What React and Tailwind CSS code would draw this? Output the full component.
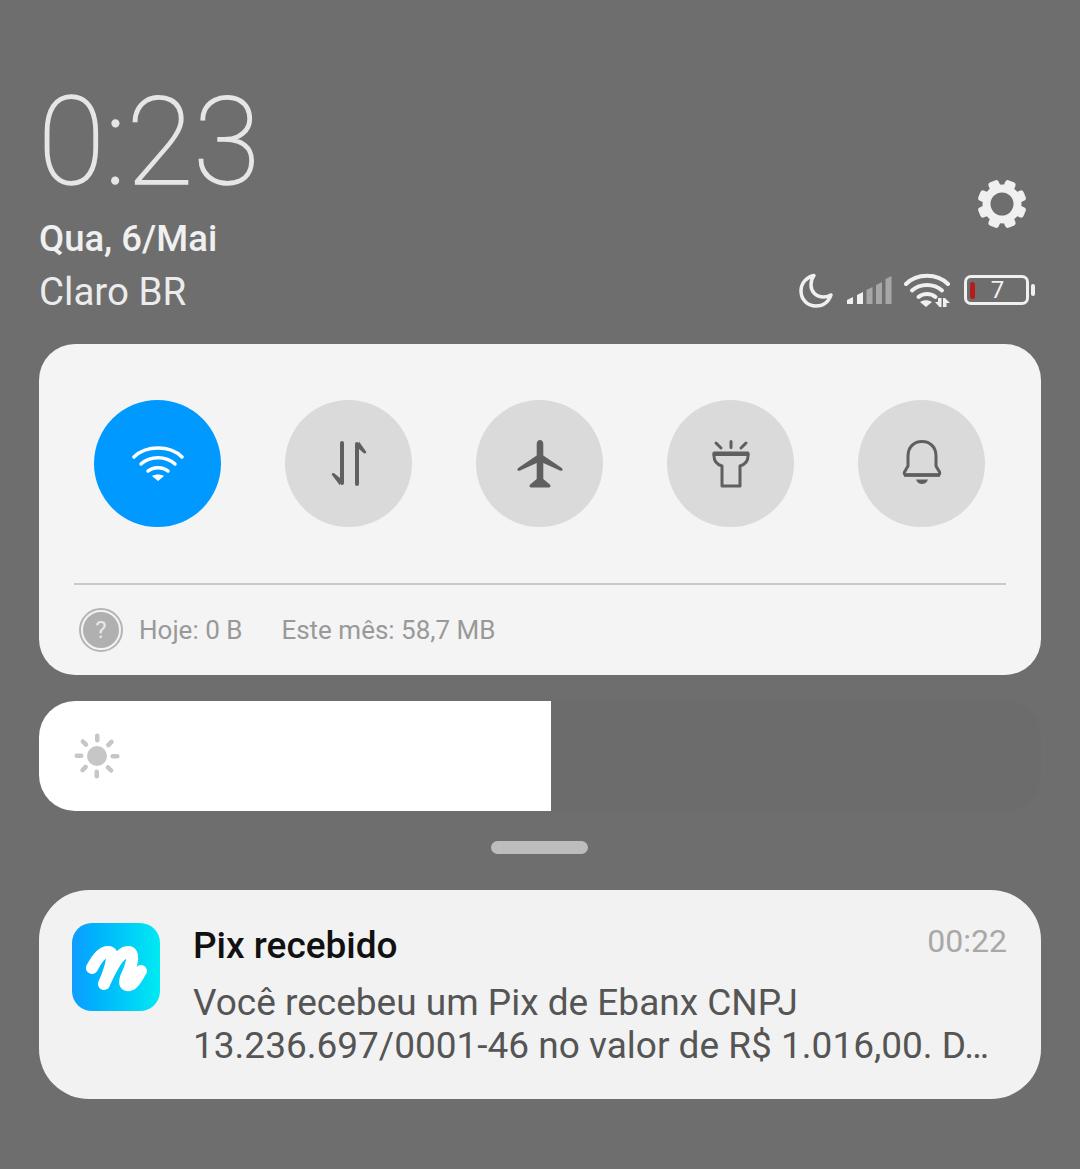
const font = { fontFamily: "Roboto, 'Noto Sans', sans-serif" };

function Gear() {
  const teeth = [0, 45, 90, 135, 180, 225, 270, 315];
  return (
    <svg width="50" height="50" viewBox="0 0 50 50">
      <g fill="#f0f0f0">
        {teeth.map((a) => (
          <rect key={a} x="19.500" y="0.500" width="11" height="12" rx="3" transform={`rotate(${a + 22.5} 25 25)`} />
        ))}
      </g>
      <circle cx="25" cy="25" r="15.500" fill="none" stroke="#f0f0f0" strokeWidth="8" />
    </svg>
  );
}

function StatusIcons() {
  return (
    <div className="flex items-center">
      <svg width="35" height="35" viewBox="0 0 35 35" fill="none">
        <path d="M15 2.500C8 4 2 9.500 2 18c0 8.500 6.500 15 15 15 7 0 12.500-4 15-11-2 1.500-4.500 2-7.500 2C17 24 12 18.500 12 12c0-3.500 1-7 3-9.500z" stroke="#f0f0f0" strokeWidth="3.500" strokeLinejoin="round" />
      </svg>
      <svg width="45" height="30" viewBox="0 0 45 30" className="ml-[13px]">
        <path d="M0 29v-4l6-3v7z" fill="#f0f0f0" />
        <path d="M10 29v-9l6-3v12z" fill="#f0f0f0" />
        <path d="M19.500 29V15l6-3v17z" fill="#a6a6a6" />
        <path d="M29 29V10l6-3v22z" fill="#a6a6a6" />
        <path d="M38.500 29V4l6-3v28z" fill="#a6a6a6" />
      </svg>
      <svg width="48" height="36" viewBox="0 0 48 36" fill="none" className="ml-[12px]">
        <path d="M2 12C13 1 33 1 44 12" stroke="#f0f0f0" strokeWidth="4" strokeLinecap="round" />
        <path d="M8 18.500C16 11 30 11 38 18.500" stroke="#f0f0f0" strokeWidth="4" strokeLinecap="round" />
        <path d="M14.500 25C19 21 27 21 31.500 25" stroke="#f0f0f0" strokeWidth="4" strokeLinecap="round" />
        <path d="M22 35l-6-5c3.500-2.500 8.500-2.500 12 0z" fill="#f0f0f0" />
        <path d="M34 26h3.500v9h-2l-4.500-5h3zM39 35v-9h2l5 5h-3.500v4z" fill="#f0f0f0" />
      </svg>
      <div className="ml-[12px] flex items-center">
        <div className="relative flex h-[30px] w-[65px] items-center justify-center rounded-[7px] border-[3px] border-[#f0f0f0] pl-[2px] text-[24px] leading-none text-[#f0f0f0]">
          7
          <div className="absolute left-[3px] top-[4px] h-[17px] w-[5px] rounded-sm bg-[#b71c1c]" />
        </div>
        <div className="ml-[2px] h-[12px] w-[4px] rounded-sm bg-[#f0f0f0]" />
      </div>
    </div>
  );
}

function WifiIcon() {
  return (
    <svg width="52" height="40" viewBox="0 0 52 40" fill="none" stroke="#fff" strokeWidth="3.500" strokeLinecap="round">
      <path d="M2 13C14 1 38 1 50 13" />
      <path d="M9 20C18 11.500 34 11.500 43 20" />
      <path d="M16 27C21 22.500 31 22.500 36 27" />
      <path d="M26 37l-6-5c3.500-2 8.500-2 12 0z" fill="#fff" stroke="none" />
    </svg>
  );
}

function DataIcon() {
  return (
    <svg width="36" height="46" viewBox="0 0 36 46" fill="#5f5f5f">
      <rect x="9" y="0" width="4" height="44" rx="2" />
      <path d="M9 44.500L1 34c-1-1.500 1-3 2.500-1.500L9 37z" />
      <rect x="24" y="1" width="4" height="44" rx="2" />
      <path d="M28 0.500l7 10c1 1.500-1 2.500-2.500 1.500L28 8z" />
    </svg>
  );
}

function PlaneIcon() {
  return (
    <svg width="46" height="48" viewBox="0 0 46 48" fill="#5f5f5f">
      <path d="M23 0c2.200 0 3.300 2 3.300 4v11.500l18.500 12.500c1.500 1.200.7 3.500-1.300 2.700L26.300 23v16l6.500 5.500c1.200 1.200.8 3-.8 3H14c-1.600 0-2-1.800-.8-3l6.500-5.500V23L2.500 30.700c-2 .8-2.800-1.500-1.300-2.700l18.500-12.500V4c0-2 1.100-4 3.300-4z" />
    </svg>
  );
}

function TorchIcon() {
  return (
    <svg width="38" height="48" viewBox="0 0 38 48" fill="none" stroke="#5f5f5f" strokeWidth="3" strokeLinecap="round" strokeLinejoin="round">
      <path d="M19 1.500v6M4 3l5 5M34 3l-5 5" />
      <path d="M2 13h34v3c0 5-3 8.500-8 10v20H10V26C5 24.500 2 21 2 16z" />
      <path d="M2 14.500h34" />
    </svg>
  );
}

function BellIcon() {
  return (
    <svg width="40" height="48" viewBox="0 0 40 48" fill="none" stroke="#5f5f5f" strokeWidth="3" strokeLinejoin="round">
      <path d="M6 26V16C6 7 12 1.500 20 1.500S34 7 34 16v10l3.500 6c.7 1.500 0 3-1.500 3H4c-1.500 0-2.200-1.500-1.500-3z" />
      <path d="M2 35h36" strokeWidth="3.500" />
      <path d="M14 39.500h12c-1 3-3.500 4.500-6 4.500s-5-1.500-6-4.500z" fill="#5f5f5f" stroke="none" />
    </svg>
  );
}

function Sun() {
  const rays = [0, 45, 90, 135, 180, 225, 270, 315];
  return (
    <svg width="46" height="46" viewBox="0 0 46 46">
      <circle cx="23" cy="23" r="10" fill="#c6c6c6" />
      {rays.map((a) => (
        <rect key={a} x="21" y="0.500" width="4.500" height="9" rx="2.250" fill="#c6c6c6" transform={`rotate(${a} 23 23)`} />
      ))}
    </svg>
  );
}

function AppLogo() {
  return (
    <div className="flex h-[88px] w-[88px] items-center justify-center rounded-[20px] bg-gradient-to-r from-[#0f9cff] to-[#00eaf2]">
      <svg width="66" height="54" viewBox="0 0 66 54" fill="none" stroke="#fff" strokeLinecap="round" strokeLinejoin="round">
        <path
          d="M9 28C13 20 19 11 26 12C32 13 28 28 21 44C26 33 35 12 45 12C52 12 49 24 45 33C41 41 41 46 46 45C51 44 54 37 58 31"
          strokeWidth="12"
        />
      </svg>
    </div>
  );
}

const tiles = [
  { id: "wifi", on: true, icon: <WifiIcon /> },
  { id: "data", icon: <DataIcon /> },
  { id: "plane", icon: <PlaneIcon /> },
  { id: "torch", icon: <TorchIcon /> },
  { id: "bell", icon: <BellIcon /> },
];

export default function App() {
  return (
    <div className="h-[1169px] overflow-hidden bg-[#6e6e6e] px-[39px] pt-[66px]" style={font}>
      {/* Header */}
      <div className="flex items-end justify-between">
        <div>
          <div className="-ml-[1px] h-[150px] text-[122px] font-thin leading-[154px] text-[#e6e6e6] [-webkit-text-stroke:1.5px_#e6e6e6]">0:23</div>
          <div className="mt-[2px] text-[36.500px] font-medium leading-[42px] text-[#f0f0f0]">Qua, 6/Mai</div>
          <div className="mt-[11px] text-[38.500px] leading-[42px] text-[#ececec]">Claro BR</div>
        </div>
        <div className="flex flex-col items-end pb-[5px] pr-[6px]">
          <div className="mb-[43px] mr-[8px]">
            <Gear />
          </div>
          <StatusIcons />
        </div>
      </div>

      {/* Toggles */}
      <div className="mt-[31px] h-[331px] rounded-[36px] bg-[#f4f4f4] px-[35px] pt-[56px]">
        <div className="flex justify-between pl-[20px] pr-[21px]">
          {tiles.map((t) => (
            <div
              key={t.id}
              className={`flex h-[127px] w-[127px] items-center justify-center rounded-full ${t.on ? "bg-[#0099ff]" : "bg-[#dadada]"}`}
            >
              {t.icon}
            </div>
          ))}
        </div>
        <div className="mt-[56px] h-[2px] bg-[#c9c9c9]" />
        <div className="mt-[23px] flex items-center pl-[5px] text-[26px] text-[#999999]">
          <div className="flex h-[44px] w-[44px] items-center justify-center rounded-full border-[2px] border-[#b5b5b5] bg-[#f4f4f4]">
            <div className="flex h-[36px] w-[36px] items-center justify-center rounded-full bg-[#b0b0b0] text-[24px] text-[#e8e8e8]">?</div>
          </div>
          <span className="ml-[16px]">Hoje: 0 B</span>
          <span className="ml-[39px]">Este mês: 58,7 MB</span>
        </div>
      </div>

      {/* Brightness */}
      <div className="mt-[26px] flex h-[110px] overflow-hidden rounded-[36px] bg-[#6c6c6c]">
        <div className="flex w-[512px] items-center bg-white pl-[35px]">
          <Sun />
        </div>
      </div>

      <div className="ml-[452px] mt-[30px] h-[13px] w-[97px] rounded-full bg-[#bdbdbd]" />

      {/* Notification */}
      <div className="mt-[36px] flex h-[209px] rounded-[50px] bg-[#f2f2f2] pl-[33px] pr-[34px] pt-[33px]">
        <AppLogo />
        <div className="ml-[33px] min-w-0 flex-1">
          <div className="flex items-start justify-between">
            <div className="text-[37px] font-medium leading-[46px] text-[#111111]">Pix recebido</div>
            <div className="text-[32px] leading-[36px] text-[#a8a8a8]">00:22</div>
          </div>
          <div className="mt-[12px] text-[37px] leading-[43px] text-[#555555]">Você recebeu um Pix de Ebanx CNPJ</div>
          <div className="whitespace-nowrap text-[37px] leading-[43px] text-[#555555]">13.236.697/0001-46 no valor de R$ 1.016,00. D…</div>
        </div>
      </div>
    </div>
  );
}
